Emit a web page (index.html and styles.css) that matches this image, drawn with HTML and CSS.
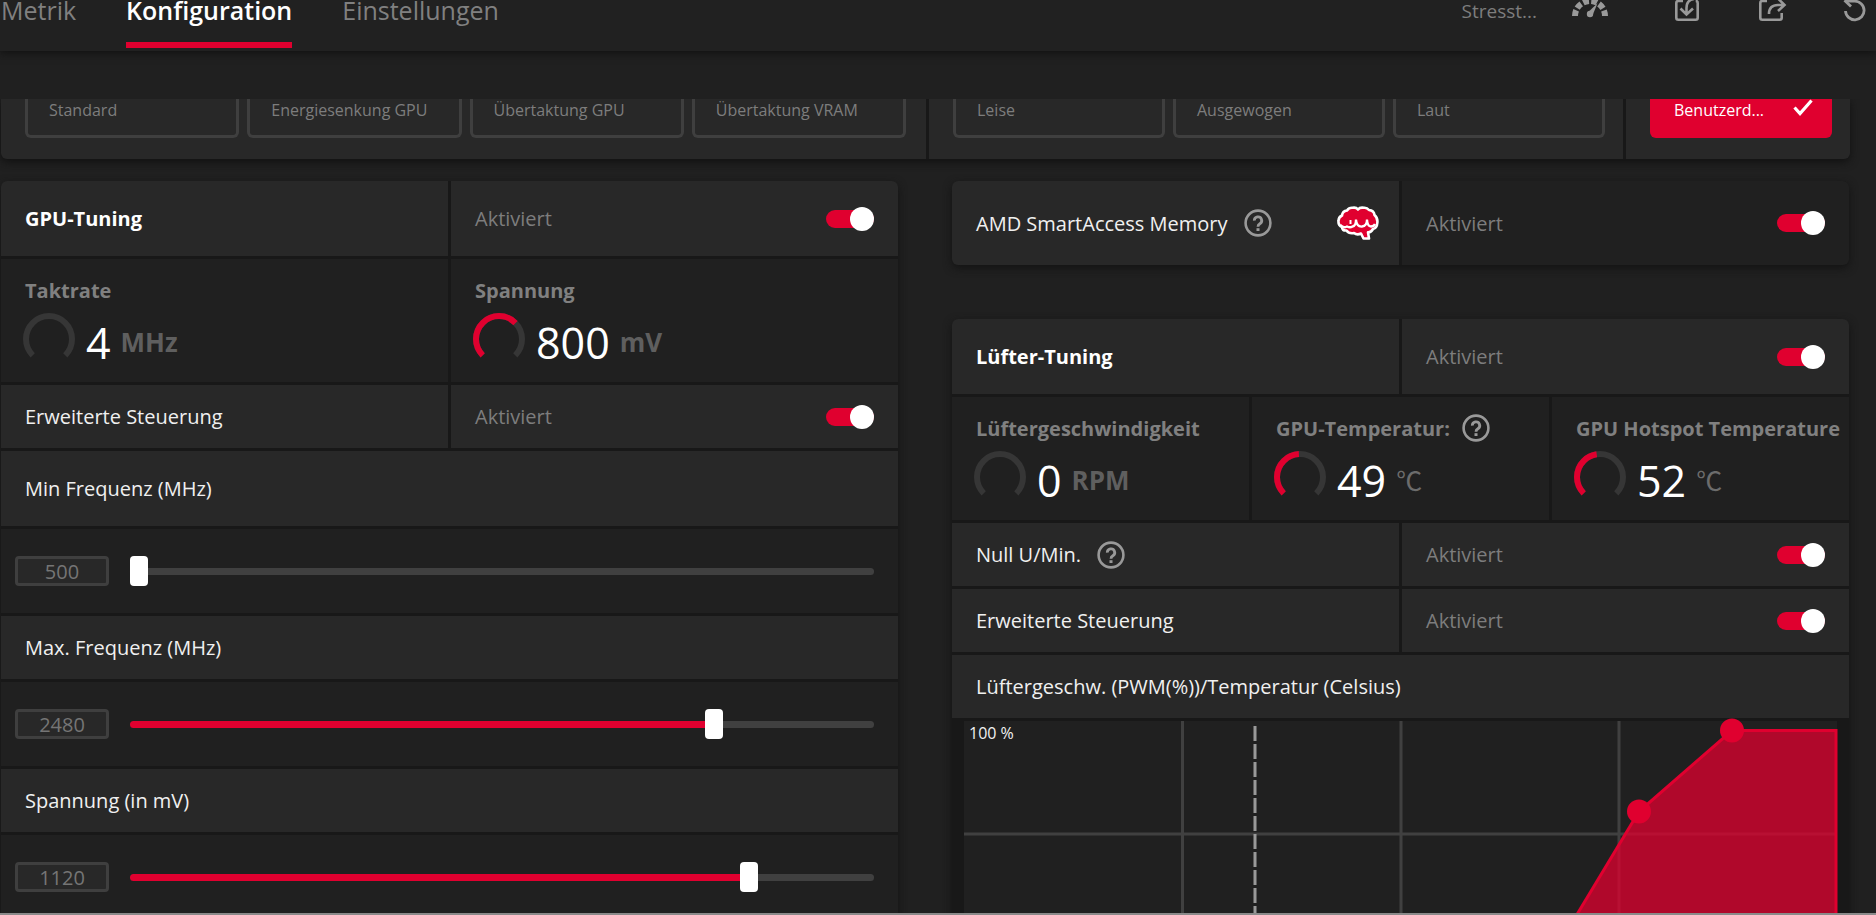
FILE: index.html
```html
<!DOCTYPE html>
<html lang="de">
<head>
    <meta charset="UTF-8">
    <title>Konfiguration</title>
    <link rel="stylesheet" href="styles.css">
</head>
<body>
<!-- shared icons -->
<svg class="defs" width="0" height="0">
    <symbol id="help" viewBox="0 0 28 28">
        <circle cx="14" cy="14" r="12.4" fill="none" stroke="#999" stroke-width="2.6"/>
        <path d="M10.3 11.6a3.7 3.7 0 1 1 5.6 3.1c-1.4.9-1.9 1.4-1.9 3" fill="none" stroke="#999" stroke-width="2.8"/>
        <rect x="12.500" y="19.2" width="3" height="2.8" fill="#999"/>
    </symbol>
</svg>

<header class="topbar">
    <nav class="tabs">
        <a href="#" class="tab">Metrik</a>
        <a href="#" class="tab active">Konfiguration</a>
        <a href="#" class="tab">Einstellungen</a>
    </nav>
    <div class="tools">
        <button class="tool stress" type="button">Stresst...
            <svg width="36" height="24" viewBox="0 0 36 24">
                <path d="M3 16A15 15 0 0 1 33 16" fill="none" stroke="#999" stroke-width="6" stroke-dasharray="5.85 2.4"/>
                <path d="M15.8 12.6L25.5 3.2L20.6 15.2z" fill="#999"/>
                <circle cx="18" cy="14" r="3.2" fill="#999"/>
            </svg>
        </button>
        <button class="tool" type="button" aria-label="Importieren">
            <svg width="28" height="24" viewBox="0 0 28 24" fill="none" stroke="#999" stroke-width="2.6">
                <path d="M8 1H3.3Q1.3 1 1.3 3V17.7Q1.3 19.7 3.3 19.7H20.7Q22.7 19.7 22.7 17.7V3Q22.7 1 20.7 1"/>
                <path d="M19 -1Q11.500 0 11.500 8V14M5.500 8.500L11.500 14.500L18 8.500"/>
            </svg>
        </button>
        <button class="tool" type="button" aria-label="Exportieren">
            <svg width="28" height="24" viewBox="0 0 28 24" fill="none" stroke="#999" stroke-width="2.6">
                <path d="M8 1H3.3Q1.3 1 1.3 3V17.7Q1.3 19.7 3.3 19.7H20.7Q22.7 19.7 22.7 17.7V13"/>
                <path d="M10 14Q10 5 19 5H25M19 -1.500L25.500 5L19 11"/>
            </svg>
        </button>
        <button class="tool" type="button" aria-label="Zurücksetzen">
            <svg width="28" height="24" viewBox="0 0 28 24" fill="none" stroke="#999" stroke-width="2.8">
                <path d="M2.500 11A9.300 9.300 0 1 0 11.500 1.200H4"/>
                <path d="M8 -4L2.500 1.200L8 6.500"/>
            </svg>
        </button>
    </div>
</header>

<main class="content">
    <section class="presets">
        <div class="preset-group">
            <button class="preset" type="button">Standard</button>
            <button class="preset" type="button">Energiesenkung GPU</button>
            <button class="preset" type="button">Übertaktung GPU</button>
            <button class="preset" type="button">Übertaktung VRAM</button>
        </div>
        <div class="preset-group">
            <button class="preset" type="button">Leise</button>
            <button class="preset" type="button">Ausgewogen</button>
            <button class="preset" type="button">Laut</button>
        </div>
        <div class="preset-group">
            <button class="preset selected" type="button">Benutzerd...
                <svg width="20" height="17" viewBox="0 0 20 17"><path d="M1.500 8.500L7 14.500L18.500 1.500" fill="none" stroke="#fff" stroke-width="3.200"/></svg>
            </button>
        </div>
    </section>

    <div class="columns">
        <div class="column">
            <section class="card">
                <div class="row tall">
                    <div class="cell"><h2>GPU-Tuning</h2></div>
                    <label class="cell state">Aktiviert <input type="checkbox" class="toggle" checked></label>
                </div>
                <div class="row metrics">
                    <div class="cell metric">
                        <h3>Taktrate</h3>
                        <div class="reading">
                            <svg class="gauge" viewBox="0 0 52 52"><path class="track" d="M9.700 42.300A23 23 0 1 1 42.300 42.300"/></svg>
                            <span class="value">4</span><span class="unit">MHz</span>
                        </div>
                    </div>
                    <div class="cell metric">
                        <h3>Spannung</h3>
                        <div class="reading">
                            <svg class="gauge" viewBox="0 0 52 52"><path class="track" d="M9.700 42.300A23 23 0 1 1 42.300 42.300"/><path class="fill" pathLength="100" stroke-dasharray="67 100" d="M9.700 42.300A23 23 0 1 1 42.300 42.300"/></svg>
                            <span class="value">800</span><span class="unit">mV</span>
                        </div>
                    </div>
                </div>
                <div class="row">
                    <div class="cell">Erweiterte Steuerung</div>
                    <label class="cell state">Aktiviert <input type="checkbox" class="toggle" checked></label>
                </div>
                <div class="row tall">
                    <div class="cell"><label for="minFreq">Min Frequenz (MHz)</label></div>
                </div>
                <div class="row slider-row">
                    <input type="text" class="number" value="500" aria-label="Min Frequenz">
                    <input type="range" class="slider" id="minFreq" min="500" max="3000" value="500" style="--fill:0%">
                </div>
                <div class="row">
                    <div class="cell"><label for="maxFreq">Max. Frequenz (MHz)</label></div>
                </div>
                <div class="row slider-row">
                    <input type="text" class="number" value="2480" aria-label="Max. Frequenz">
                    <input type="range" class="slider" id="maxFreq" min="500" max="3000" value="2480" style="--fill:79%">
                </div>
                <div class="row">
                    <div class="cell"><label for="voltage">Spannung (in mV)</label></div>
                </div>
                <div class="row slider-row">
                    <input type="text" class="number" value="1120" aria-label="Spannung">
                    <input type="range" class="slider" id="voltage" min="700" max="1200" value="1120" style="--fill:84%">
                </div>
            </section>
        </div>

        <div class="column">
            <section class="card sam">
                <div class="row">
                    <div class="cell">AMD SmartAccess Memory
                        <svg class="help"><use href="#help"/></svg>
                        <svg class="brain" width="42" height="34" viewBox="0 0 42 34">
                            <path d="M21 3.500Q23 1 27 1.800Q30 1.500 32 4Q37 4.500 37.500 9Q41 12 40.300 17Q40 22 36 23Q34 26.500 31 26.300L32 32.500H26.500L24 27.500Q20 29.500 17 27Q12 28 9.500 24.500Q5 25 5 21Q1 19.500 1.500 15Q1.500 11 5 9.500Q5.500 5 10 4.500Q12 1.500 15.500 1.800Q19 1 21 3.500Z" fill="#e0002f" stroke="#fff" stroke-width="2.600" stroke-linejoin="round"/>
                            <path d="M3.500 19Q6 22.500 10 20.500Q13 22 15.500 20.500Q19 20 19 13.500Q19.500 21 25 20.500Q30 20 30 13.500Q30.500 20.500 34 20.500Q37 20.500 38 18" fill="none" stroke="#fff" stroke-width="2.300"/>
                            <path d="M13.500 14V18" fill="none" stroke="#fff" stroke-width="2"/>
                        </svg>
                    </div>
                    <label class="cell state dark">Aktiviert <input type="checkbox" class="toggle" checked></label>
                </div>
            </section>

            <section class="card">
                <div class="row tall">
                    <div class="cell"><h2>Lüfter-Tuning</h2></div>
                    <label class="cell state">Aktiviert <input type="checkbox" class="toggle" checked></label>
                </div>
                <div class="row metrics">
                    <div class="cell metric">
                        <h3>Lüftergeschwindigkeit</h3>
                        <div class="reading">
                            <svg class="gauge" viewBox="0 0 52 52"><path class="track" d="M9.700 42.300A23 23 0 1 1 42.300 42.300"/></svg>
                            <span class="value">0</span><span class="unit">RPM</span>
                        </div>
                    </div>
                    <div class="cell metric">
                        <h3>GPU-Temperatur: <svg class="help"><use href="#help"/></svg></h3>
                        <div class="reading">
                            <svg class="gauge" viewBox="0 0 52 52"><path class="track" d="M9.700 42.300A23 23 0 1 1 42.300 42.300"/><path class="fill" pathLength="100" stroke-dasharray="49 100" d="M9.700 42.300A23 23 0 1 1 42.300 42.300"/></svg>
                            <span class="value">49</span><span class="unit celsius">℃</span>
                        </div>
                    </div>
                    <div class="cell metric">
                        <h3>GPU Hotspot Temperature</h3>
                        <div class="reading">
                            <svg class="gauge" viewBox="0 0 52 52"><path class="track" d="M9.700 42.300A23 23 0 1 1 42.300 42.300"/><path class="fill" pathLength="100" stroke-dasharray="47 100" d="M9.700 42.300A23 23 0 1 1 42.300 42.300"/></svg>
                            <span class="value">52</span><span class="unit celsius">℃</span>
                        </div>
                    </div>
                </div>
                <div class="row">
                    <div class="cell">Null U/Min. <svg class="help"><use href="#help"/></svg></div>
                    <label class="cell state">Aktiviert <input type="checkbox" class="toggle" checked></label>
                </div>
                <div class="row">
                    <div class="cell">Erweiterte Steuerung</div>
                    <label class="cell state">Aktiviert <input type="checkbox" class="toggle" checked></label>
                </div>
                <div class="row">
                    <div class="cell">Lüftergeschw. (PWM(%))/Temperatur (Celsius)</div>
                </div>
                <!-- fan curve -->
                <div class="chart">
                    <svg viewBox="0 0 873 240">
                        <rect width="873" height="240" fill="#202020"/>
                        <path d="M218.500 0V240M437 0V240M655 0V240M0 113H873" stroke="#404040" stroke-width="3"/>
                        <path d="M291 5V240" stroke="#999" stroke-width="3" stroke-dasharray="15 3"/>
                        <path d="M585 240L675 90.500L768 9.500H872V240" fill="#e0002f" fill-opacity="0.750" stroke="#e0002f" stroke-width="3"/>
                        <circle cx="675" cy="90.500" r="12" fill="#e0002f"/>
                        <circle cx="768" cy="9.500" r="12" fill="#e0002f"/>
                        <text x="5" y="18">100 %</text>
                    </svg>
                </div>
            </section>
        </div>
    </div>
</main>
</body>
</html>
```
FILE: styles.css
```css
*{
    box-sizing: border-box;
}
body{
    margin: 0;
    height: 100vh;
    display: flex;
    flex-direction: column;
    overflow: hidden;
    background: #202020;
    border-bottom: 2px solid #8a8a8a;
    color: #f0f0f0;
    font-family: "Open Sans", "Noto Sans", sans-serif;
    font-size: 20px;
}
.defs{
    position: absolute;
}
button, input{
    font-family: inherit;
}
h2, h3{
    margin: 0;
    font-size: 20px;
    font-weight: 700;
    white-space: nowrap;
}
h2{
    color: #fff;
}

/* top bar */
.topbar{
    display: flex;
    justify-content: space-between;
    height: 51px;
    flex-shrink: 0;
    background: #212121;
    box-shadow: 0 2px 8px #111;
}
.tabs{
    display: flex;
    gap: 50px;
    padding-left: 1px;
}
.tab{
    height: 48px;
    line-height: 21px;
    font-size: 25px;
    color: #808080;
    text-decoration: none;
}
.tab.active{
    color: #fff;
    font-weight: 600;
    border-bottom: 6px solid #e0002f;
}
.tools{
    display: flex;
    align-items: flex-start;
    gap: 56px;
    padding-right: 5px;
}
.tool{
    display: flex;
    gap: 35px;
    padding: 0;
    border: 0;
    background: none;
    line-height: 22px;
    font-size: 19px;
    color: #7d7d7d;
}
.tool.stress{
    margin-right: 11px;
}

/* presets */
.content{
    flex: 1;
    min-height: 0;
    overflow: hidden;
    margin-top: 48px;
    padding: 0 26px 0 1px;
}
.presets{
    display: grid;
    grid-template-columns: 925fr 694fr 224fr;
    gap: 3px;
    height: 60px;
    background: #181818;
    border-radius: 0 0 6px 6px;
    overflow: hidden;
    box-shadow: 0 3px 8px #111;
}
.preset-group{
    display: flex;
    gap: 8px;
    padding: 0 18px 0 24px;
    background: #282828;
}
.preset-group:first-child{
    padding-right: 20px;
}
.preset{
    flex: 1;
    display: flex;
    justify-content: space-between;
    height: 39px;
    padding: 0 16px 0 21px;
    border: 3px solid #3f3f3f;
    border-top: 0;
    border-radius: 0 0 6px 6px;
    background: none;
    line-height: 22px;
    font-size: 16px;
    color: #7d7d7d;
    white-space: nowrap;
}
.preset.selected{
    background: #e0002f;
    border-color: #e0002f;
    color: #fff;
}

/* cards */
.columns{
    display: grid;
    grid-template-columns: 1fr 1fr;
    gap: 54px;
    margin: 22px 1px 0 0;
}
.column{
    display: flex;
    flex-direction: column;
    gap: 54px;
}
.card{
    display: flex;
    flex-direction: column;
    gap: 3px;
    background: #181818;
    border-radius: 6px;
    overflow: hidden;
    box-shadow: 0 3px 8px #131313;
}
.row{
    display: flex;
    gap: 3px;
    height: 63px;
}
.row.tall{
    height: 75px;
}
.cell{
    flex: 1 1 0;
    min-width: 0;
    display: flex;
    align-items: center;
    padding: 0 24px;
    background: #282828;
    white-space: nowrap;
}
.cell.state{
    justify-content: space-between;
    color: #7d7d7d;
}
.sam .row{
    height: 84px;
}
.cell.dark{
    background: #202020;
}
.help{
    width: 28px;
    height: 28px;
    margin-left: 16px;
    flex-shrink: 0;
}
.brain{
    margin: 0 -4px 0 auto;
}

.toggle{
    appearance: none;
    display: flex;
    align-items: center;
    justify-content: flex-end;
    width: 48px;
    height: 18px;
    margin: 0;
    border-radius: 9px;
    background: #e0002f;
}
.toggle::before{
    content: "";
    width: 24px;
    height: 24px;
    border-radius: 50%;
    background: #fff;
}

/* readings */
.row.metrics{
    height: 123px;
}
.cell.metric{
    flex-direction: column;
    align-items: flex-start;
    padding: 17px 0 0 24px;
    background: #202020;
    color: #808080;
}
.metric h3{
    display: flex;
    align-items: center;
    height: 28px;
}
.metric .help{
    margin-left: 12px;
}
.reading{
    display: flex;
    align-items: flex-start;
    margin: 9px 0 0 -2px;
}
.gauge{
    width: 52px;
    height: 52px;
}
.gauge path{
    fill: none;
    stroke-width: 6;
}
.gauge .track{
    stroke: #363636;
}
.gauge .fill{
    stroke: #e0002f;
}
.value{
    margin: 0 10px 0 11px;
    font-size: 43px;
    line-height: 60px;
    color: #fff;
}
.unit{
    font-size: 26px;
    font-weight: 700;
    line-height: 58px;
    color: #5f5f5f;
}
.unit.celsius{
    font-family: "Noto Sans CJK JP", sans-serif;
    font-weight: 400;
    color: #6c6c6c;
}

/* sliders */
.row.slider-row{
    align-items: center;
    gap: 21px;
    height: 84px;
    padding: 0 24px 0 14px;
    background: #202020;
}
.number{
    width: 94px;
    height: 30px;
    padding: 0;
    border: 3px solid #3f3f3f;
    border-radius: 4px;
    background: #282828;
    color: #757575;
    font-size: 20px;
    text-align: center;
}
.slider{
    appearance: none;
    flex: 1;
    min-width: 0;
    height: 7px;
    margin: 0;
    border-radius: 4px;
    background: linear-gradient(to right, #e0002f var(--fill), #404040 var(--fill));
}
.slider::-webkit-slider-thumb{
    appearance: none;
    width: 18px;
    height: 30px;
    border-radius: 4px;
    background: #fff;
}

.chart{
    padding: 0 12px;
}
.chart svg{
    display: block;
    width: 100%;
    overflow: visible;
}
.chart text{
    font-size: 16px;
    fill: #f0f0f0;
}
```
